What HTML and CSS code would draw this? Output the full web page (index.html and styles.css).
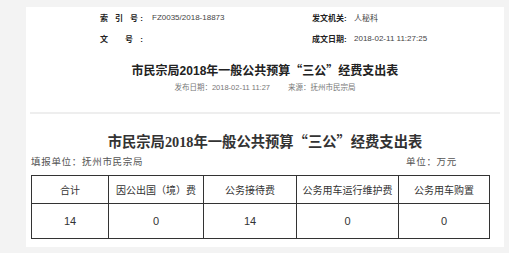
FILE: index.html
```html
<!DOCTYPE html>
<html lang="zh">
<head>
<meta charset="utf-8">
<link rel="stylesheet" href="styles.css">
</head>
<body>
<div class="panel">
  <div class="meta">
    <span class="label spaced">索 引 号:</span><span class="value">FZ0035/2018-18873</span>
    <span class="label">发文机关:</span><span class="value">人秘科</span>
    <span class="label spaced">文 号:</span><span class="value"></span>
    <span class="label">成文日期:</span><span class="value">2018-02-11 11:27:25</span>
  </div>
  <h1 class="title">市民宗局2018年一般公共预算<span class="q">“</span>三公<span class="q">”</span>经费支出表</h1>
  <div class="dateline"><span>发布日期：2018-02-11 11:27</span><span>来源：抚州市民宗局</span></div>
  <div class="divider"></div>
  <h2 class="doc-title">市民宗局2018年一般公共预算<span class="q">“</span>三公<span class="q">”</span>经费支出表</h2>
  <div class="unit-row"><span>填报单位：抚州市民宗局</span><span>单位：万元</span></div>
  <table class="data">
    <colgroup>
      <col style="width:77px"><col style="width:95px"><col style="width:93px"><col style="width:102px"><col style="width:91px">
    </colgroup>
    <tr class="head"><td>合计</td><td>因公出国（境）费</td><td>公务接待费</td><td>公务用车运行维护费</td><td>公务用车购置</td></tr>
    <tr class="body"><td>14</td><td>0</td><td>14</td><td>0</td><td>0</td></tr>
  </table>
</div>
</body>
</html>
```
FILE: styles.css
```css
html, body {
  margin: 0;
  padding: 0;
  background: #f3f3f3;
}
body {
  font-family: "Liberation Sans", "Noto Sans CJK SC", sans-serif;
  color: #333;
}
.panel {
  margin: 7px 5px 0 26px;
  width: 478px;
  height: 240px;
  background: #fff;
  display: flex;
  flex-direction: column;
}
.meta {
  display: grid;
  grid-template-columns: 52px 160px 42px 1fr;
  grid-auto-rows: 21px;
  align-items: center;
  margin-left: 74px;
  font-size: 8px;
}
.label {
  font-weight: bold;
  color: #222;
  white-space: pre;
}
.label.spaced {
  width: 43px;
  text-align: justify;
  text-align-last: justify;
}
.value {
  color: #444;
}
.title {
  margin: 11px 0 0;
  font-size: 12px;
  line-height: 20px;
  font-weight: bold;
  text-align: center;
  color: #222;
}
.q {
  font-family: "Noto Sans CJK SC", sans-serif;
}
.dateline {
  margin-top: 1px;
  display: flex;
  justify-content: center;
  gap: 18px;
  font-size: 7.5px;
  line-height: 12px;
  color: #777;
}
.divider {
  margin: 18px 4px 0;
  height: 2px;
  background: #eeeeee;
}
.doc-title {
  margin: 17px 0 0;
  font-family: "Liberation Serif", "Noto Sans CJK SC", serif;
  font-size: 14.3px;
  line-height: 20px;
  font-weight: bold;
  text-align: center;
  color: #333;
}
.unit-row {
  margin: 3px 0 0 5px;
  width: 426px;
  display: flex;
  justify-content: space-between;
  font-size: 9.5px;
  line-height: 14px;
  letter-spacing: 0.7px;
  color: #555;
}
.data {
  margin: 6px 0 0 5px;
  border-collapse: collapse;
  table-layout: fixed;
  width: 458px;
  font-size: 10px;
  color: #333;
}
.data td {
  border: 1px solid #333;
  text-align: center;
  padding: 0;
}
.head td {
  height: 27px;
}
.body td {
  height: 34px;
  font-size: 11px;
}
```
